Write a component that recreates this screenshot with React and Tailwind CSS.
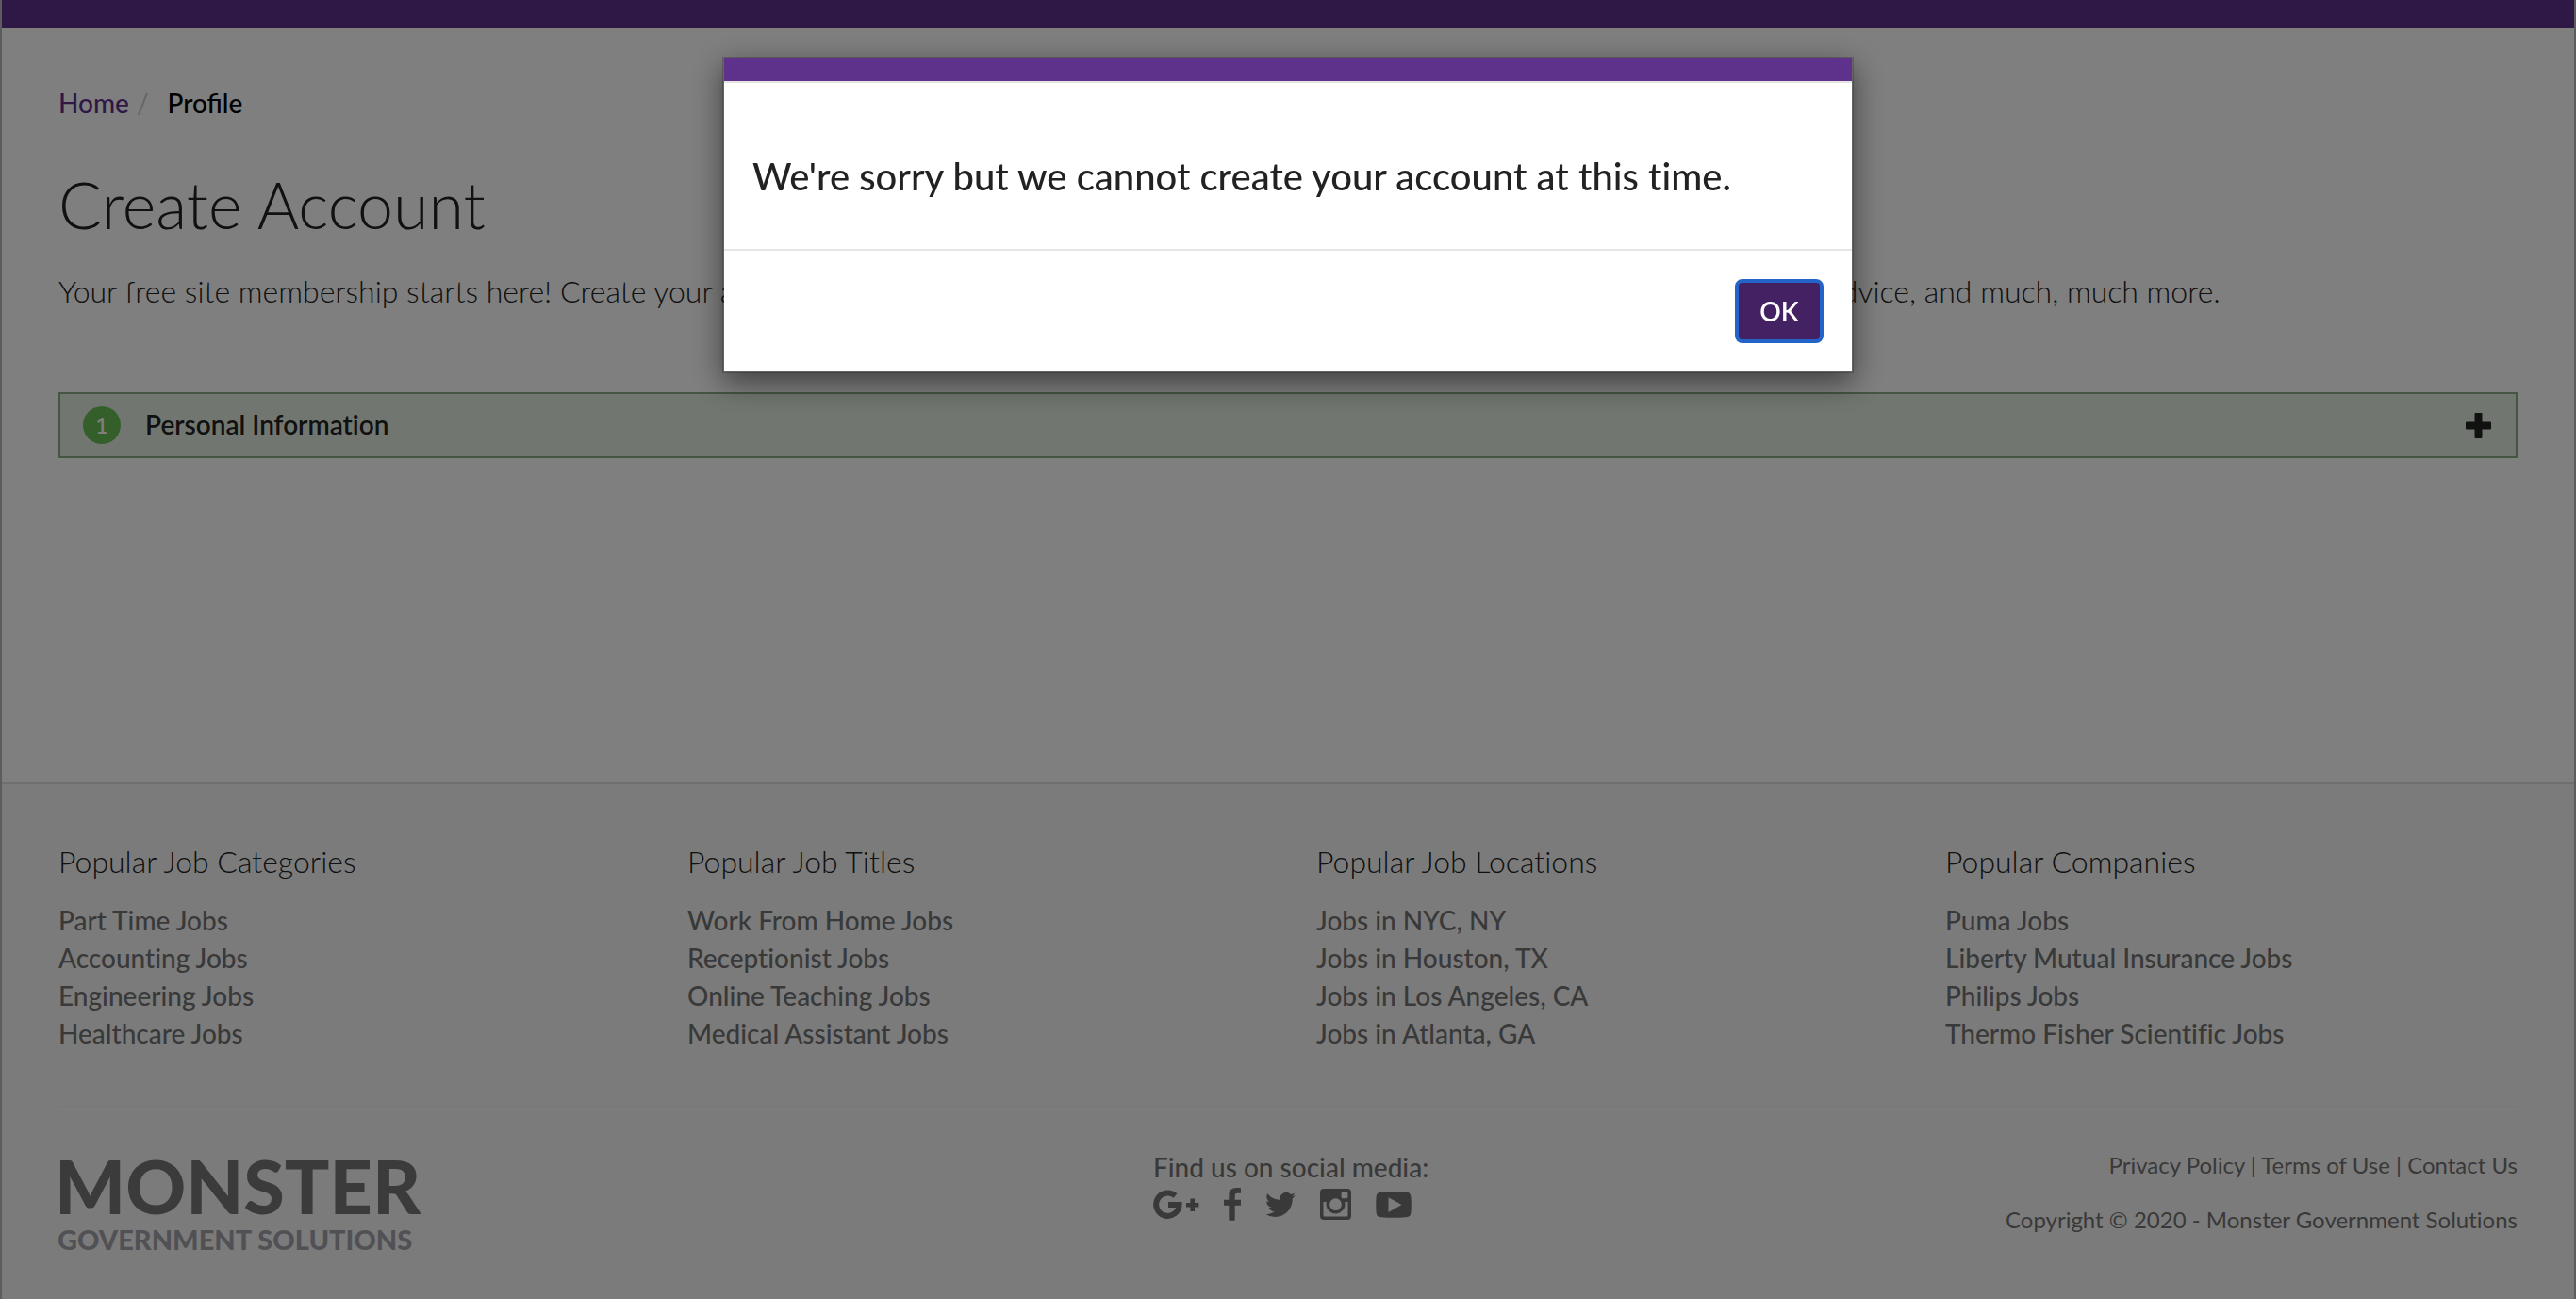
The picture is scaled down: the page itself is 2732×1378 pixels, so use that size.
const columns = [
  { title: "Popular Job Categories", links: ["Part Time Jobs", "Accounting Jobs", "Engineering Jobs", "Healthcare Jobs"] },
  { title: "Popular Job Titles", links: ["Work From Home Jobs", "Receptionist Jobs", "Online Teaching Jobs", "Medical Assistant Jobs"] },
  { title: "Popular Job Locations", links: ["Jobs in NYC, NY", "Jobs in Houston, TX", "Jobs in Los Angeles, CA", "Jobs in Atlanta, GA"] },
  { title: "Popular Companies", links: ["Puma Jobs", "Liberty Mutual Insurance Jobs", "Philips Jobs", "Thermo Fisher Scientific Jobs"] },
];

function GooglePlus() {
  return (
    <svg width="49" height="34" viewBox="0 0 49 34" fill="none" aria-hidden="true">
      <path d="M23.5 7.6A12.2 12.2 0 1 0 27.6 17H16" stroke="currentColor" strokeWidth="6" />
      <path d="M35 17.3h13.4M41.700 10.600v13.400" stroke="currentColor" strokeWidth="4.600" />
    </svg>
  );
}

function Facebook() {
  return (
    <svg width="18" height="35" viewBox="0 0 18 35" fill="currentColor" aria-hidden="true">
      <path d="M18 .2v5.600h-3.300c-2.500 0-3 1.200-3 3v3.900H18v6h-6.300V34.800H5.300V18.700H0v-6h5.300V8C5.300 2.800 8.500 0 13.200 0 15.400 0 17.400.1 18 .2z" />
    </svg>
  );
}

function Twitter() {
  return (
    <svg width="32" height="26" viewBox="0 0 32 26" fill="currentColor" aria-hidden="true">
      <path d="M32 3.080a13 13 0 0 1-3.770 1.030A6.570 6.570 0 0 0 31.100.480a13.100 13.100 0 0 1-4.170 1.590A6.560 6.560 0 0 0 15.750 8.060 18.600 18.600 0 0 1 2.230 1.200a6.560 6.560 0 0 0 2.030 8.760 6.500 6.500 0 0 1-2.970-.82v.08a6.570 6.570 0 0 0 5.260 6.440 6.600 6.600 0 0 1-2.960.11 6.570 6.570 0 0 0 6.130 4.560A13.200 13.200 0 0 1 0 23.050 18.600 18.600 0 0 0 10.060 26c12.080 0 18.680-10 18.680-18.680l-.02-.85A13.300 13.300 0 0 0 32 3.080z" />
    </svg>
  );
}

function Instagram() {
  return (
    <svg width="33" height="33" viewBox="0 0 33 33" aria-hidden="true">
      <path
        fillRule="evenodd"
        fill="currentColor"
        d="M4 0h25a4 4 0 0 1 4 4v25a4 4 0 0 1-4 4H4a4 4 0 0 1-4-4V4a4 4 0 0 1 4-4zM3.500 14v14.200a1.300 1.300 0 0 0 1.300 1.300h23.400a1.300 1.300 0 0 0 1.300-1.300V14h-3.300a10 10 0 1 1-19.400 0zM24 3.600a1.400 1.400 0 0 0-1.400 1.400v3.800a1.400 1.400 0 0 0 1.400 1.400h4a1.400 1.400 0 0 0 1.400-1.400V5A1.400 1.400 0 0 0 28 3.600zM16.500 10.300a6.400 6.400 0 1 0 0 12.800 6.400 6.400 0 0 0 0-12.800z"
      />
    </svg>
  );
}

function Youtube() {
  return (
    <svg width="38" height="28" viewBox="0 0 38 28" aria-hidden="true">
      <path
        fillRule="evenodd"
        fill="currentColor"
        d="M6 .6Q19-.4 32 .6C36 .9 37.200 2.600 37.500 6.500Q38 14 37.500 21.500C37.200 25.400 36 27 32 27.300Q19 28.400 6 27.300C2 27 .8 25.400.5 21.500Q0 14 .5 6.500C.8 2.600 2 .9 6 .6zM13.500 6.200v15.800L27.500 14z"
      />
    </svg>
  );
}

const socials = [
  { name: "Google Plus", Icon: GooglePlus },
  { name: "Facebook", Icon: Facebook },
  { name: "Twitter", Icon: Twitter },
  { name: "Instagram", Icon: Instagram },
  { name: "YouTube", Icon: Youtube },
];

function Footer() {
  return (
    <footer className="flex-1 border-t-2 border-[#dedede] bg-[#f7f7f7] px-[60px] pt-[60px] text-[#737373]">
      <div className="grid grid-cols-4 gap-x-[60px] border-b-2 border-white pb-[60px]">
        {columns.map((column) => (
          <nav key={column.title} aria-label={column.title}>
            <h2 className="text-[32px] leading-11 font-light text-[#222]">{column.title}</h2>
            <ul className="pt-5 font-medium">
              {column.links.map((link) => (
                <li key={link}>
                  <a href="#">{link}</a>
                </li>
              ))}
            </ul>
          </nav>
        ))}
      </div>
      <div className="grid grid-cols-3 pt-10 font-medium">
        <a href="#" className="-ml-1 block w-fit pt-2.5 font-black whitespace-nowrap">
          <span className="block text-[79px] leading-[60px] text-[#777]">MONSTER</span>
          <span className="block pt-3 pl-[3px] text-[29px] leading-[30px] text-[#a3a3ab]">GOVERNMENT SOLUTIONS</span>
        </a>
        <div className="mx-auto w-[286px]">
          <p className="whitespace-nowrap">Find us on social media:</p>
          <div className="flex items-center gap-[26px] pt-0.5">
            {socials.map(({ name, Icon }) => (
              <a key={name} href="#" aria-label={name}>
                <Icon />
              </a>
            ))}
          </div>
        </div>
        <div className="text-right text-2xl leading-9 font-normal">
          <p>
            <a href="#">Privacy Policy</a> | <a href="#">Terms of Use</a> | <a href="#">Contact Us</a>
          </p>
          <p className="pt-[22px]">Copyright © 2020 - Monster Government Solutions</p>
        </div>
      </div>
    </footer>
  );
}

function Dialog() {
  return (
    <div className="fixed inset-0 bg-black/50 pt-[60px]">
      <div
        role="alertdialog"
        aria-modal="true"
        aria-labelledby="dialog-message"
        className="mx-auto w-full max-w-[1200px] border-2 border-black/20 bg-white bg-clip-padding shadow-[0_10px_30px_rgba(0,0,0,0.5)]"
      >
        <div className="h-[26px] border-b-2 border-[#e5e5e5] bg-[#5e318a]" />
        <h2 id="dialog-message" className="px-[30px] pt-[75px] pb-[53px] text-[40px] leading-12 font-medium text-[#222]">
          We're sorry but we cannot create your account at this time.
        </h2>
        <div className="flex justify-end border-t-2 border-[#e5e5e5] p-[30px]">
          <button type="button" className="h-[68px] w-[94px] rounded-lg border-4 border-[#2463c8] bg-[#432163] font-semibold text-white">
            OK
          </button>
        </div>
      </div>
    </div>
  );
}

export default function App() {
  return (
    <div className="flex min-h-screen flex-col border-x-2 border-[#bbb] bg-white font-['Lato',sans-serif] text-[28px] leading-10 text-[#222] [font-variant-ligatures:none]">
      <div className="h-[30px] bg-[#5e318a]" />
      <main className="h-[800px] px-[60px] pt-[59px]">
        <nav aria-label="Breadcrumb">
          <ol className="flex font-medium">
            <li><a href="#" className="text-[#5e318a]">Home</a></li>
            <li className="px-2 font-normal text-[#ccc]">/</li>
            <li className="pl-3 text-black [font-variant-ligatures:normal]" aria-current="page">Profile</li>
          </ol>
        </nav>
        <h1 className="pt-12 text-[68px] leading-20 font-light">Create Account</h1>
        <p className="pt-[30px] text-[32px] leading-11 font-light">
          Your free site membership starts here! Create your account to apply for jobs, post your resume, save your searches, get job alerts, career advice, and much, much more.
        </p>
        <button type="button" aria-expanded="false" className="mt-[85px] flex h-[70px] w-full items-center border-2 border-[#8aac86] bg-[#e2eee0] px-6">
          <span className="flex size-10 items-center justify-center rounded-full bg-[#6abf55] pt-0.5 text-[22px] font-semibold text-white">1</span>
          <span className="pb-0.5 pl-[26px] font-semibold">Personal Information</span>
          <svg width="29" height="28" viewBox="0 0 29 28" className="ml-auto" aria-hidden="true">
            <path d="M10.500 1h6q1 0 1 1v8.500H26q1 0 1 1v6q0 1-1 1h-8.500V27q0 1-1 1h-6q-1 0-1-1v-8.500H1q-1 0-1-1v-6q0-1 1-1h8.500V2q0-1 1-1z" fill="currentColor" />
          </svg>
        </button>
      </main>
      <Footer />
      <Dialog />
    </div>
  );
}
